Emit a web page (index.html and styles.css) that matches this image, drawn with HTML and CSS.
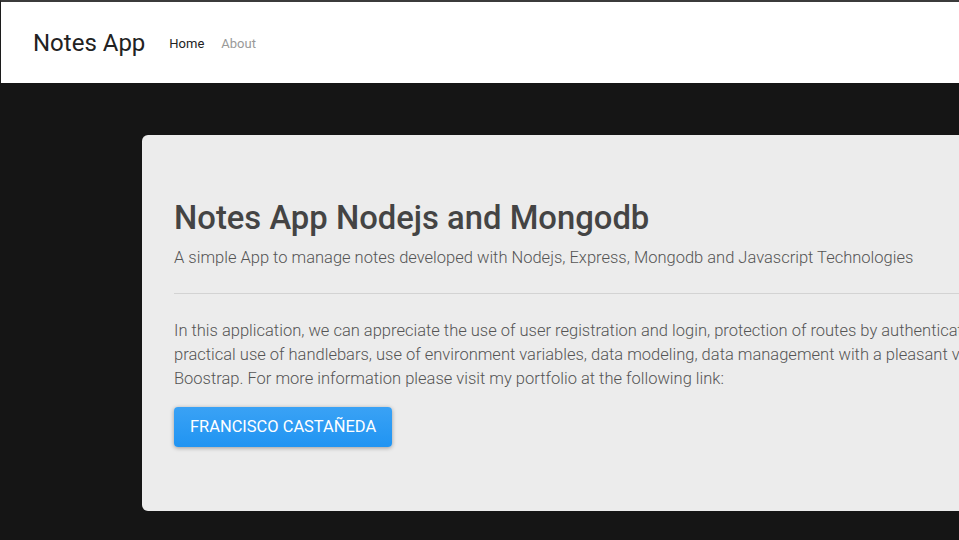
FILE: index.html
```html
<!DOCTYPE html>
<html>
<head>
<meta charset="utf-8">
<link rel="stylesheet" href="styles.css">
</head>
<body>
<nav class="navbar">
  <a class="brand" href="#">Notes App</a>
  <ul class="nav">
    <li><a class="nav-link active" href="#">Home</a></li>
    <li><a class="nav-link" href="#">About</a></li>
  </ul>
</nav>
<main class="container">
  <section class="jumbotron">
    <h1 class="title">Notes App Nodejs and Mongodb</h1>
    <p class="lead">A simple App to manage notes developed with Nodejs, Express, Mongodb and Javascript Technologies</p>
    <hr class="divider">
    <p class="text">In this application, we can appreciate the use of user registration and login, protection of routes by authentication, practical use of handlebars, use of environment variables, data modeling, data management with a pleasant view of Boostrap. For more information please visit my portfolio at the following link:</p>
    <a class="btn" href="#">Francisco Castañeda</a>
  </section>
</main>
</body>
</html>
```
FILE: styles.css
```css
html, body {
  margin: 0;
  padding: 0;
}
body {
  background: #151515;
  font-family: Roboto, "Noto Sans", sans-serif;
  overflow: hidden;
  width: 959px;
  height: 540px;
}
.navbar {
  display: flex;
  align-items: center;
  background: #fff;
  height: 81px;
  border-top: 2px solid #3b3b3b;
  border-left: 1px solid #1c1c1c;
  padding-left: 32px;
  box-sizing: content-box;
}
.brand {
  font-size: 24px;
  color: #222;
  text-decoration: none;
  margin-right: 24px;
  line-height: 1;
}
.nav {
  display: flex;
  list-style: none;
  margin: 0;
  padding: 0;
  gap: 17px;
}
.nav-link {
  font-size: 13px;
  color: #999;
  text-decoration: none;
}
.nav-link.active {
  color: #222;
}
.container {
  padding: 52px 0 0 142px;
  width: 1200px;
}
.jumbotron {
  background: #ececec;
  border-radius: 6px;
  padding: 63px 32px 64px;
  width: 860px;
}
.title {
  margin: 0 0 7px;
  font-size: 32.8px;
  font-weight: 500;
  color: #444;
  line-height: 1.25;
}
.lead {
  margin: 0;
  font-size: 16.5px;
  font-weight: 300;
  color: #555;
  line-height: 1.5;
  white-space: nowrap;
}
.divider {
  border: 0;
  border-top: 1px solid #d3d3d3;
  margin: 22px 0 25px;
  width: 1000px;
}
.text {
  margin: 0 0 16px;
  font-size: 16.5px;
  font-weight: 300;
  color: #555;
  line-height: 24px;
}
.btn {
  display: inline-block;
  background: linear-gradient(#3aa2f5, #2094f2);
  color: #fff;
  text-decoration: none;
  text-transform: uppercase;
  font-size: 16.45px;
  padding: 0 16px;
  height: 40px;
  line-height: 40px;
  border-radius: 4px;
  box-shadow: 0 1px 4px rgba(0,0,0,0.35);
}
```
